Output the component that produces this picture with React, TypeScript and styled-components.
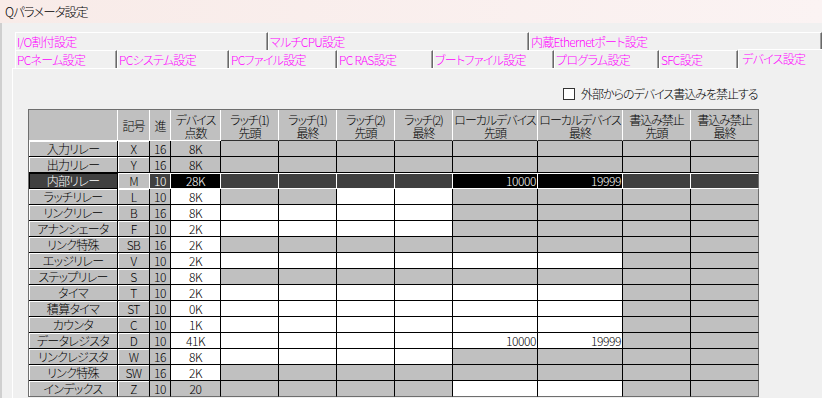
import React from 'react';
import styled, { createGlobalStyle } from 'styled-components';

const FONT = `"Noto Sans CJK JP", "Noto Sans", "Liberation Sans", sans-serif`;

const GlobalStyle = createGlobalStyle`
  html, body { margin: 0; padding: 0; }
  body {
    background: #f0f0f0;
    font-family: ${FONT};
    font-size: 12px;
    color: #000;
    overflow: hidden;
  }
  * { box-sizing: border-box; }
`;

const Window = styled.div`
  width: 822px;
  height: 398px;
  display: flex;
  flex-direction: column;
  background: #f0f0f0;
  overflow: hidden;
  font-feature-settings: "palt";
  letter-spacing: -0.7px;
  font-weight: 300;
`;

const TitleBar = styled.div`
  height: 23px;
  flex: none;
  display: flex;
  align-items: center;
  padding-left: 5px;
  background: linear-gradient(to right, #f8ebe8, #fbf3f3);
`;

const Title = styled.span`
  font-size: 12.5px;
  line-height: 14px;
  letter-spacing: -1px;
  color: #000;
`;

const Body = styled.div`
  flex: 1;
  display: flex;
  flex-direction: column;
  padding: 9px 0 0 10px;
  border-left: 2px solid #cfcfcf;
`;

const TabArea = styled.div`
  display: flex;
  flex-direction: column;
  margin-left: 3px;
`;

const TabRow = styled.div`
  display: flex;
  height: 18px;
`;

const Tab = styled.div<{ $w?: number; $selected?: boolean }>`
  ${p => (p.$w ? `width: ${p.$w}px; flex: none;` : 'flex: 1;')}
  height: ${p => (p.$selected ? '20px' : '18px')};
  margin-top: ${p => (p.$selected ? '-1px' : '0')};
  position: relative;
  z-index: ${p => (p.$selected ? 2 : 1)};
  background: #f0f0f0;
  border-top: 1px solid #ffffff;
  border-left: 1px solid #ffffff;
  border-right: ${p => (p.$selected ? 'none' : '1px solid #696969')};
  box-shadow: ${p => (p.$selected ? 'none' : 'inset -1px 0 0 #a0a0a0')};
  color: #ff00ff;
  font-size: 12px;
  line-height: 17px;
  padding-left: ${p => (p.$selected ? '3px' : '1px')};
  white-space: nowrap;
  overflow: hidden;
`;

const Panel = styled.div`
  flex: 1;
  border-top: 1px solid #ffffff;
  border-left: 1px solid #ffffff;
  padding: 19px 0 0 15px;
  display: flex;
  flex-direction: column;
`;

const OptionRow = styled.label`
  display: flex;
  align-items: center;
  height: 12px;
  padding-left: 535px;
  gap: 6px;
  font-size: 12px;
  line-height: 12px;
  letter-spacing: -1px;
`;

const CheckBox = styled.span`
  width: 12px;
  height: 12px;
  flex: none;
  border: 1px solid #333333;
  background: #ffffff;
`;

const DeviceGrid = styled.div`
  margin-top: 9px;
  display: grid;
  width: 731px;
  grid-template-columns: 89px 32px 21px 50px repeat(4, 58px) repeat(2, 85px) repeat(2, 68px);
  grid-template-rows: 31px repeat(16, 16px);
  border-left: 1px solid #6e6e6e;
  border-top: 1px solid #6e6e6e;
`;

const HeadCell = styled.div<{ $last?: boolean; $dataCol?: boolean }>`
  background: #c0c0c0;
  border-right: 1px solid ${p => (p.$last ? '#6e6e6e' : '#ffffff')};
  border-bottom: 1px solid ${p => (p.$dataCol ? '#303030' : '#ffffff')};
  display: flex;
  align-items: center;
  justify-content: center;
  text-align: center;
  white-space: pre;
  font-size: 12px;
  line-height: 13px;
  letter-spacing: -1px;
  padding-top: 1px;
`;

type FixedState = 'normal' | 'rowSel' | 'focus';

const FixedCell = styled.div<{ $state: FixedState; $lastRow?: boolean }>`
  background: ${p => (p.$state === 'rowSel' ? '#404040' : '#c0c0c0')};
  color: ${p => (p.$state === 'rowSel' ? '#ffffff' : '#000000')};
  border-right: 1px solid ${p => (p.$state === 'focus' ? '#ffffff' : '#000000')};
  border-bottom: 1px solid
    ${p => (p.$lastRow ? '#6e6e6e' : p.$state === 'focus' ? '#ffffff' : '#000000')};
  box-shadow: ${p =>
    p.$state === 'rowSel' ? 'inset 1px 1px 0 #000000' : 'inset 1px 1px 0 #ffffff'};
  display: flex;
  align-items: center;
  justify-content: center;
  font-size: 12px;
  line-height: 15px;
  white-space: nowrap;
`;

type Tone = 'gray' | 'white' | 'dark' | 'black';
const toneBg: Record<Tone, string> = {
  gray: '#c0c0c0',
  white: '#ffffff',
  dark: '#404040',
  black: '#000000',
};

const DataCell = styled.div<{
  $tone: Tone;
  $sel?: boolean;
  $lastCol?: boolean;
  $lastRow?: boolean;
  $right?: boolean;
}>`
  background: ${p => toneBg[p.$tone]};
  color: ${p => (p.$tone === 'dark' || p.$tone === 'black' ? '#ffffff' : '#000000')};
  border-right: 1px solid ${p => (p.$lastCol ? '#6e6e6e' : p.$sel ? '#ffffff' : '#000000')};
  border-bottom: 1px solid ${p => (p.$lastRow ? '#6e6e6e' : p.$sel ? '#ffffff' : '#000000')};
  box-shadow: ${p => (p.$sel ? 'inset 0 1px 0 #ffffff' : 'none')};
  display: flex;
  align-items: center;
  justify-content: ${p => (p.$right ? 'flex-end' : 'center')};
  padding: 0 1px;
  font-size: 12px;
  line-height: 15px;
  letter-spacing: -0.4px;
  white-space: nowrap;
`;

const tabsTop = [
  { label: 'I/O割付設定', w: 253 },
  { label: 'マルチCPU設定', w: 261 },
  { label: '内蔵Ethernetポート設定' },
];

const tabsBottom = [
  { label: 'PCネーム設定', w: 102 },
  { label: 'PCシステム設定', w: 112 },
  { label: 'PCファイル設定', w: 108 },
  { label: 'PC RAS設定', w: 96 },
  { label: 'ブートファイル設定', w: 121 },
  { label: 'プログラム設定', w: 105 },
  { label: 'SFC設定', w: 79 },
  { label: 'デバイス設定', selected: true },
];

const headers = [
  '',
  '記号',
  '進',
  'デバイス\n点数',
  'ラッチ(1)\n先頭',
  'ラッチ(1)\n最終',
  'ラッチ(2)\n先頭',
  'ラッチ(2)\n最終',
  'ローカルデバイス\n先頭',
  'ローカルデバイス\n最終',
  '書込み禁止\n先頭',
  '書込み禁止\n最終',
];

type Row = {
  name: string;
  sym: string;
  base: string;
  pts: string;
  ptsW: boolean;
  l1: boolean;
  l2: boolean;
  local: boolean;
  localStart?: string;
  localEnd?: string;
  sel?: boolean;
};

const rows: Row[] = [
  { name: '入力リレー', sym: 'X', base: '16', pts: '8K', ptsW: false, l1: false, l2: false, local: false },
  { name: '出力リレー', sym: 'Y', base: '16', pts: '8K', ptsW: false, l1: false, l2: false, local: false },
  { name: '内部リレー', sym: 'M', base: '10', pts: '28K', ptsW: true, l1: false, l2: false, local: true, localStart: '10000', localEnd: '19999', sel: true },
  { name: 'ラッチリレー', sym: 'L', base: '10', pts: '8K', ptsW: true, l1: false, l2: true, local: false },
  { name: 'リンクリレー', sym: 'B', base: '16', pts: '8K', ptsW: true, l1: true, l2: true, local: false },
  { name: 'アナンシェータ', sym: 'F', base: '10', pts: '2K', ptsW: true, l1: true, l2: true, local: false },
  { name: 'リンク特殊', sym: 'SB', base: '16', pts: '2K', ptsW: true, l1: false, l2: false, local: false },
  { name: 'エッジリレー', sym: 'V', base: '10', pts: '2K', ptsW: true, l1: true, l2: true, local: true },
  { name: 'ステップリレー', sym: 'S', base: '10', pts: '8K', ptsW: true, l1: false, l2: false, local: false },
  { name: 'タイマ', sym: 'T', base: '10', pts: '2K', ptsW: true, l1: true, l2: true, local: true },
  { name: '積算タイマ', sym: 'ST', base: '10', pts: '0K', ptsW: true, l1: true, l2: true, local: true },
  { name: 'カウンタ', sym: 'C', base: '10', pts: '1K', ptsW: true, l1: true, l2: true, local: true },
  { name: 'データレジスタ', sym: 'D', base: '10', pts: '41K', ptsW: true, l1: true, l2: true, local: true, localStart: '10000', localEnd: '19999' },
  { name: 'リンクレジスタ', sym: 'W', base: '16', pts: '8K', ptsW: true, l1: true, l2: true, local: false },
  { name: 'リンク特殊', sym: 'SW', base: '16', pts: '2K', ptsW: true, l1: false, l2: false, local: false },
  { name: 'インデックス', sym: 'Z', base: '10', pts: '20', ptsW: false, l1: false, l2: false, local: true },
];

function DeviceRow({ row, last }: { row: Row; last: boolean }) {
  const sel = !!row.sel;
  const latchTone = (on: boolean): Tone => (sel ? 'dark' : on ? 'white' : 'gray');
  const localTone: Tone = sel ? 'black' : row.local ? 'white' : 'gray';
  const writeTone: Tone = sel ? 'dark' : 'gray';
  return (
    <>
      <FixedCell $state={sel ? 'rowSel' : 'normal'} $lastRow={last}>{row.name}</FixedCell>
      <FixedCell $state={sel ? 'focus' : 'normal'} $lastRow={last}>{row.sym}</FixedCell>
      <DataCell $tone={sel ? 'dark' : 'gray'} $sel={sel} $lastRow={last}>{row.base}</DataCell>
      <DataCell $tone={sel ? 'black' : row.ptsW ? 'white' : 'gray'} $sel={sel} $lastRow={last}>{row.pts}</DataCell>
      <DataCell $tone={latchTone(row.l1)} $sel={sel} $lastRow={last} />
      <DataCell $tone={latchTone(row.l1)} $sel={sel} $lastRow={last} />
      <DataCell $tone={latchTone(row.l2)} $sel={sel} $lastRow={last} />
      <DataCell $tone={latchTone(row.l2)} $sel={sel} $lastRow={last} />
      <DataCell $tone={localTone} $sel={sel} $lastRow={last} $right>{row.localStart ?? ''}</DataCell>
      <DataCell $tone={localTone} $sel={sel} $lastRow={last} $right>{row.localEnd ?? ''}</DataCell>
      <DataCell $tone={writeTone} $sel={sel} $lastRow={last} />
      <DataCell $tone={writeTone} $sel={sel} $lastRow={last} $lastCol />
    </>
  );
}

export default function App() {
  return (
    <>
      <GlobalStyle />
      <Window>
        <TitleBar>
          <Title>Qパラメータ設定</Title>
        </TitleBar>
        <Body>
          <TabArea>
            <TabRow>
              {tabsTop.map(t => (
                <Tab key={t.label} $w={t.w}>{t.label}</Tab>
              ))}
            </TabRow>
            <TabRow>
              {tabsBottom.map(t => (
                <Tab key={t.label} $w={t.w} $selected={t.selected}>{t.label}</Tab>
              ))}
            </TabRow>
          </TabArea>
          <Panel>
            <OptionRow>
              <CheckBox />
              <span>外部からのデバイス書込みを禁止する</span>
            </OptionRow>
            <DeviceGrid>
              {headers.map((h, i) => (
                <HeadCell key={i} $dataCol={i >= 4} $last={i === headers.length - 1}>{h}</HeadCell>
              ))}
              {rows.map((r, i) => (
                <DeviceRow key={i} row={r} last={i === rows.length - 1} />
              ))}
            </DeviceGrid>
          </Panel>
        </Body>
      </Window>
    </>
  );
}
